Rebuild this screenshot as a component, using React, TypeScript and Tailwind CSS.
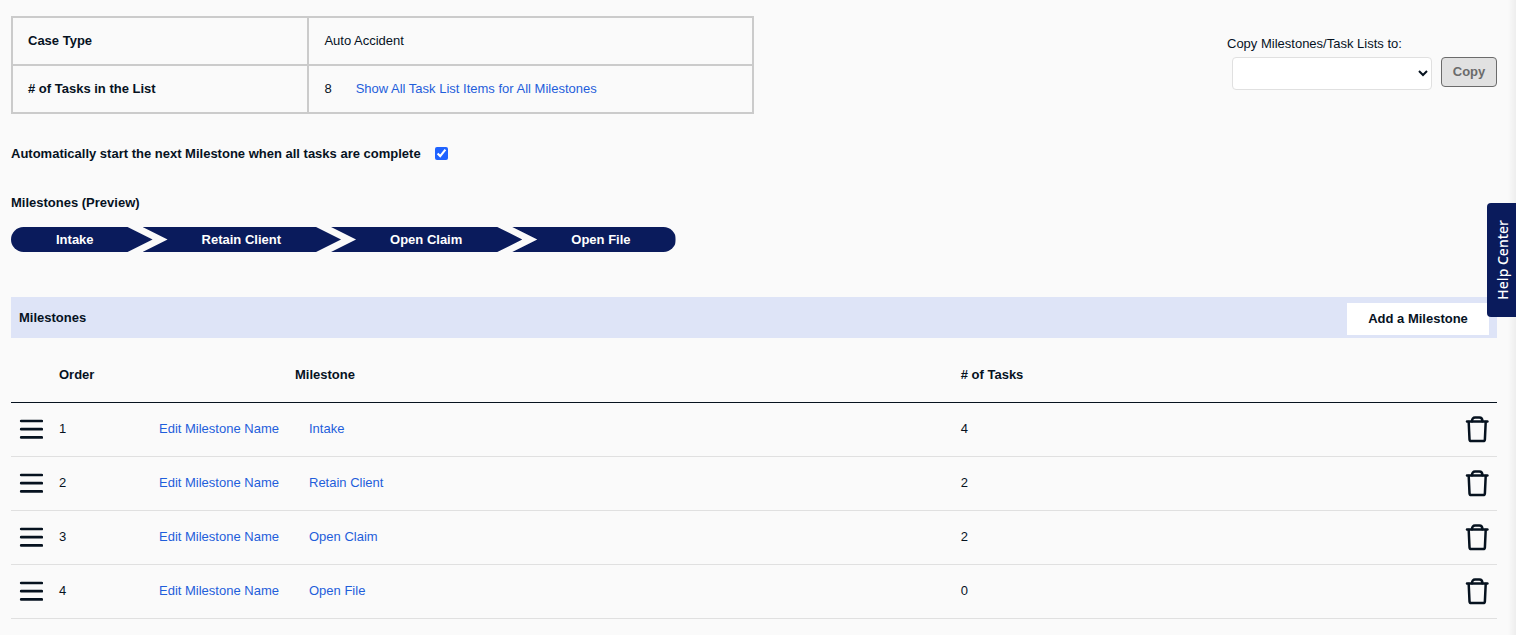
import { useState } from "react"
import clsx from "clsx"

type Milestone = {
  order: number
  name: string
  tasks: number
}

const MILESTONES: Milestone[] = [
  { order: 1, name: "Intake", tasks: 4 },
  { order: 2, name: "Retain Client", tasks: 2 },
  { order: 3, name: "Open Claim", tasks: 2 },
  { order: 4, name: "Open File", tasks: 0 },
]

function MenuIcon() {
  return (
    <svg width="24" height="20" viewBox="0 0 24 20" fill="none" stroke="currentColor" strokeWidth="2.7" strokeLinecap="round">
      <path d="M2.200 2h20.600M2.200 10.200h20.600M2.200 18.400h20.600" />
    </svg>
  )
}

function TrashIcon() {
  return (
    <svg width="24" height="28" viewBox="0 0 24 28" fill="none" stroke="currentColor" strokeWidth="2.5" strokeLinecap="round" strokeLinejoin="round">
      <path d="M2 6.600h20.400" />
      <path d="M7 6.200c0-2.400 1.200-3.700 3-3.700h4.400c1.800 0 3 1.300 3 3.700" />
      <path d="M3.700 7l.8 17.300c.1 1.100.8 1.700 1.800 1.700h11.800c1 0 1.700-.6 1.800-1.700l.8-17.300" />
    </svg>
  )
}

function Preview() {
  const last = MILESTONES.length - 1
  return (
    <ol className="mt-4 flex h-[25px] text-[13px] leading-[25px] font-bold text-white">
      {MILESTONES.map((m, i) => (
        <li
          key={m.order}
          className={clsx(
            "bg-[#0a1b5c]",
            i === 0 && "rounded-l-[13px] pl-[45px] pr-[59px] [clip-path:polygon(0_0,calc(100%-25px)_0,100%_50%,calc(100%-25px)_100%,0_100%)]",
            i > 0 && i < last && "-ml-[10px] pl-[59px] pr-[60px] [clip-path:polygon(0_0,calc(100%-25px)_0,100%_50%,calc(100%-25px)_100%,0_100%,25px_50%)]",
            i === last && "-ml-[10px] rounded-r-[13px] pl-[59px] pr-[45px] [clip-path:polygon(0_0,100%_0,100%_100%,0_100%,25px_50%)]"
          )}
        >
          {m.name}
        </li>
      ))}
    </ol>
  )
}

export default function App() {
  const [autoStart, setAutoStart] = useState(true)

  return (
    <div className="relative min-h-screen bg-[#fafafa] pt-4 pr-[19px] pl-[11px] font-['Liberation_Sans',Arial,sans-serif] text-[13px] leading-4 text-[#06121f]">
      <div className="flex items-start justify-between">
        <table className="w-1/2 table-fixed border-collapse">
          <tbody>
            <tr className="h-12">
              <th scope="row" className="w-[40%] border-2 border-[#cbcbcb] px-[15px] text-left">Case Type</th>
              <td className="border-2 border-[#cbcbcb] px-[15px]">Auto Accident</td>
            </tr>
            <tr className="h-12">
              <th scope="row" className="border-2 border-[#cbcbcb] px-[15px] text-left"># of Tasks in the List</th>
              <td className="border-2 border-[#cbcbcb] px-[15px]">
                <span className="mr-6">8</span>
                <a href="#all" className="text-[#1f5edb]">Show All Task List Items for All Milestones</a>
              </td>
            </tr>
          </tbody>
        </table>

        <div className="pt-5">
          <label htmlFor="copy-to" className="block">Copy Milestones/Task Lists to:</label>
          <div className="mt-[5px] ml-[5px] flex items-start gap-[9px]">
            <select id="copy-to" className="h-[33px] w-[200px] rounded-[4px] border border-[#e0e0e0] bg-white">
              <option value=""></option>
            </select>
            <button type="button" disabled className="h-[30px] w-14 rounded-[4px] border border-[#6b6b6b] bg-[#e1e1e1] font-bold text-[#6b6b6b]">Copy</button>
          </div>
        </div>
      </div>

      <div className="mt-8 flex items-start gap-[14px]">
        <label htmlFor="auto-start" className="font-bold">Automatically start the next Milestone when all tasks are complete</label>
        <input id="auto-start" type="checkbox" checked={autoStart} onChange={(e) => setAutoStart(e.target.checked)} className="mt-px size-[13px] accent-[#1f63ff]" />
      </div>

      <h2 className="mt-[33px] font-bold">Milestones (Preview)</h2>
      <Preview />

      <div className="mt-[45px] flex h-[41px] items-center justify-between bg-[#dee4f7] px-2">
        <h2 className="font-bold">Milestones</h2>
        <button type="button" className="mt-[3px] h-8 w-[142px] bg-white font-bold">Add a Milestone</button>
      </div>

      <table className="w-full table-fixed border-collapse text-left">
        <thead>
          <tr className="h-16 border-b border-[#06121f]">
            <th className="w-10"></th>
            <th className="w-[100px] px-2 pt-[10px]">Order</th>
            <th className="w-[136px]"></th>
            <th className="w-[44.8%] px-2 pt-[10px]">Milestone</th>
            <th className="px-2 pt-[10px]"># of Tasks</th>
            <th className="w-10"></th>
          </tr>
        </thead>
        <tbody>
          {MILESTONES.map((m) => (
            <tr key={m.order} className="h-[54px] border-b border-[#e0e0e0]">
              <td className="pl-2">
                <button type="button" aria-label={`Move ${m.name}`} className="block cursor-grab">
                  <MenuIcon />
                </button>
              </td>
              <td className="px-2">{m.order}</td>
              <td className="px-2 whitespace-nowrap">
                <a href="#edit" className="text-[#1f5edb]">Edit Milestone Name</a>
              </td>
              <td className="pr-2 pl-[22px]">
                <a href="#milestone" className="text-[#1f5edb]">{m.name}</a>
              </td>
              <td className="px-2">{m.tasks}</td>
              <td className="pr-2">
                <button type="button" aria-label={`Delete ${m.name}`} className="ml-auto block">
                  <TrashIcon />
                </button>
              </td>
            </tr>
          ))}
        </tbody>
      </table>

      <div className="absolute inset-y-0 right-0 w-2 bg-linear-to-r from-[#fafafa] to-[#eeeeee]" />
      <button type="button" className="absolute top-[203px] right-0 flex h-[114px] w-[29px] items-center justify-center rounded-l-[4px] bg-[#0a1b5c] pl-[2px] text-white">
        <span className="rotate-180 font-['Noto_Sans',sans-serif] text-[14px] leading-5 font-medium [writing-mode:vertical-rl]">Help Center</span>
      </button>
    </div>
  )
}
